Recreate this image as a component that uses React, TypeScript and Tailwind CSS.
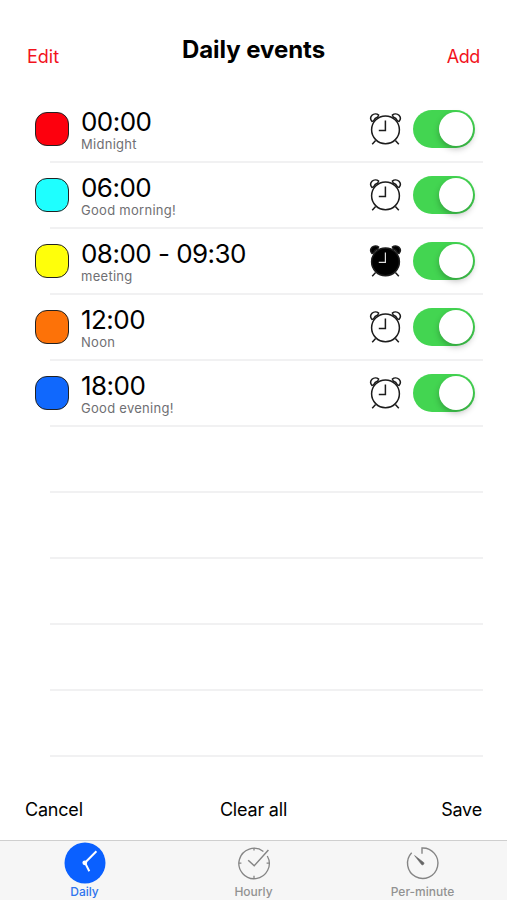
import clsx from 'clsx'

const events = [
  { time: '00:00', label: 'Midnight', color: 'bg-[#fd000d]', alarm: false },
  { time: '06:00', label: 'Good morning!', color: 'bg-[#1effff]', alarm: false },
  { time: '08:00 - 09:30', label: 'meeting', color: 'bg-[#ffff0a]', alarm: true },
  { time: '12:00', label: 'Noon', color: 'bg-[#fd7208]', alarm: false },
  { time: '18:00', label: 'Good evening!', color: 'bg-[#1068fd]', alarm: false },
]

const emptyRows = [0, 1, 2, 3, 4]

function AlarmIcon({ filled }: { filled: boolean }) {
  const fill = filled ? '#000' : 'none'
  return (
    <svg viewBox="0 0 33 34" className="h-[34px] w-[33px]" fill="none" stroke="#1c1c1c" strokeWidth="1.5">
      <path d="M2.9 9.4C1.3 7.4 1.3 5 3 3.3 4.8 1.6 7.7 1.4 9.6 3L8.8 5C6.7 5.6 5.4 6.9 4.6 8.9Z" fill={fill} />
      <path d="M30.1 9.4C31.7 7.4 31.7 5 30 3.3 28.2 1.6 25.3 1.4 23.4 3L24.2 5C26.3 5.6 27.6 6.9 28.4 8.9Z" fill={fill} />
      <circle cx="16.5" cy="17.8" r="13.9" fill={fill} />
      <path d="M6.6 28.4 3.2 32.2M26.4 28.4 29.8 32.2" />
      <path d="M16.4 8.5V18.4H9.8" stroke={filled ? '#ddd' : '#1c1c1c'} strokeWidth={filled ? 1.2 : 1.5} />
    </svg>
  )
}

function Toggle() {
  return (
    <div className="flex h-[38px] w-[62px] items-center justify-end rounded-full bg-[#43d551] pr-[2px]">
      <div className="h-[34px] w-[34px] rounded-full bg-white shadow-[0_3px_6px_rgba(0,0,0,0.25)]" />
    </div>
  )
}

function DailyIcon() {
  return (
    <svg viewBox="0 0 42 42" className="h-[42px] w-[42px]">
      <circle cx="21" cy="21" r="20.5" fill="#0a60ff" />
      <path d="M32.4 9.3 21 20.8 25.3 29.2" fill="none" stroke="#fff" strokeWidth="2" />
      <circle cx="20.8" cy="20.8" r="2.4" fill="#fff" />
    </svg>
  )
}

function HourlyIcon() {
  return (
    <svg viewBox="0 0 42 42" className="h-[42px] w-[42px]" fill="none" stroke="#858585" strokeWidth="1.3">
      <path d="M30.4 9.5A15.2 15.2 0 1 0 34.3 14" />
      <path d="M21 6V8.6M21 33.8V36.4M5.8 21.2H8.4M33.6 21.2H36.2" />
      <path d="M15.2 18.2 21.2 23.8 35.4 8" strokeWidth="1.5" />
    </svg>
  )
}

function MinuteIcon() {
  return (
    <svg viewBox="0 0 42 42" className="mr-px h-[42px] w-[42px]" fill="none" stroke="#858585" strokeWidth="1.4">
      <path d="M21 11.8V6A15.2 15.2 0 1 1 10.7 10.7" />
      <path d="M13.6 13.6 22.6 20.4A1.5 1.5 0 0 1 20.6 22.6Z" fill="#666" stroke="#666" strokeWidth="0.6" />
    </svg>
  )
}

const tabs = [
  { label: 'Daily', icon: DailyIcon, active: true },
  { label: 'Hourly', icon: HourlyIcon, active: false },
  { label: 'Per-minute', icon: MinuteIcon, active: false },
]

export default function App() {
  return (
    <div className="flex h-[900px] w-[507px] flex-col overflow-hidden bg-white font-['Inter',sans-serif] text-black">
      {/* Header */}
      <header className="flex h-24 shrink-0 justify-between px-[27px]">
        <button className="mt-[46px] h-[22px] w-[60px] text-left text-[18px] leading-[22px] text-[#f2131c]">Edit</button>
        <h1 className="mt-[35px] text-[24px] leading-[30px] font-bold tracking-[-0.05px]">Daily events</h1>
        <button className="mt-[46px] h-[22px] w-[60px] text-right text-[18px] leading-[22px] tracking-[-0.4px] text-[#f2131c]">Add</button>
      </header>

      {/* Events */}
      <ul className="flex-1">
        {events.map((event) => (
          <li key={event.time} className="h-[66px]">
            <div className="flex h-[65px] items-center pr-8 pl-[35px]">
              <div className={clsx('h-[34px] w-[34px] rounded-[12px] border border-[#222]', event.color)} />
              <div className="ml-3 flex-1">
                <div className="pt-px text-[26px] leading-[29px] tracking-[-0.53px]">{event.time}</div>
                <div className="text-[13px] leading-4 tracking-[0.28px] text-[#6f6f73]">{event.label}</div>
              </div>
              <AlarmIcon filled={event.alarm} />
              <div className="ml-[11px]">
                <Toggle />
              </div>
            </div>
            <div className="mr-[24px] ml-[50px] h-[2px] bg-[#f1f1f2]" />
          </li>
        ))}
        {emptyRows.map((row) => (
          <li key={row} className="h-[66px] pt-[65px]">
            <div className="mr-[24px] ml-[50px] h-[2px] bg-[#f1f1f2]" />
          </li>
        ))}
      </ul>

      {/* Actions */}
      <div className="grid h-[60px] shrink-0 grid-cols-3 items-center px-[25px] pb-[2px] text-[18px] tracking-[-0.2px]">
        <button className="text-left">Cancel</button>
        <button className="text-center">Clear all</button>
        <button className="text-right">Save</button>
      </div>

      {/* Tab bar */}
      <nav className="grid h-[60px] shrink-0 grid-cols-3 border-t border-[#cfcfcf] bg-[#f6f6f6]">
        {tabs.map((tab) => {
          const Icon = tab.icon
          return (
            <div key={tab.label} className="flex flex-col items-center pt-px">
              <Icon />
              <span className={clsx('text-[12px] leading-4 font-medium', tab.active ? 'text-[#2f74ee]' : 'text-[#929292]')}>
                {tab.label}
              </span>
            </div>
          )
        })}
      </nav>
    </div>
  )
}
